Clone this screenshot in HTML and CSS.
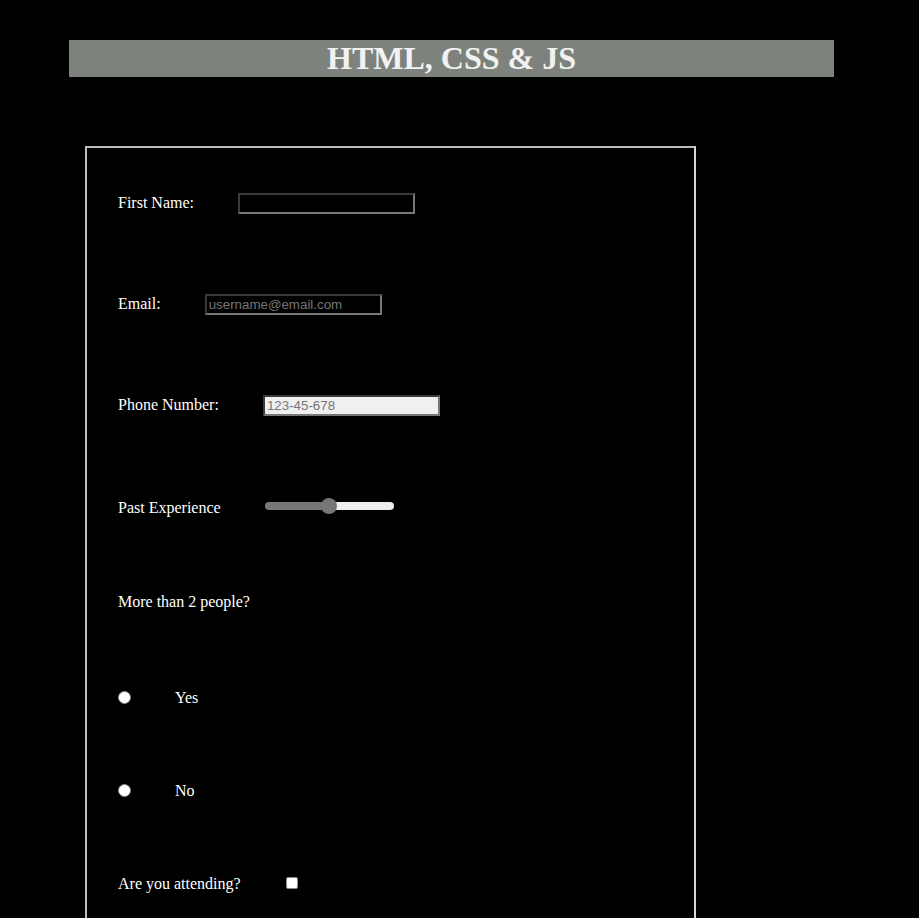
FILE: index.html
```html
<!DOCTYPE html>
<html lang="en">
<head>
<meta charset="utf-8">
<title>HTML, CSS &amp; JS</title>
<link rel="stylesheet" href="styles.css">
</head>
<body>
<header class="banner">
  <h1 class="banner-title">HTML, CSS &amp; JS</h1>
</header>
<form class="form-box">
  <div class="row">
    <label class="label" for="fname">First Name:</label>
    <input class="text-input" id="fname" type="text">
  </div>
  <div class="row">
    <label class="label" for="email">Email:</label>
    <input class="text-input" id="email" type="email" placeholder="username@email.com">
  </div>
  <div class="row">
    <label class="label" for="phone">Phone Number:</label>
    <input class="text-input text-input--light" id="phone" type="tel" placeholder="123-45-678">
  </div>
  <div class="row row--wide">
    <label class="label" for="exp">Past Experience</label>
    <input class="range" id="exp" type="range" min="0" max="100" value="50">
  </div>
  <div class="row row--tight">
    <span class="label">More than 2 people?</span>
  </div>
  <div class="row row--loose">
    <input class="radio" id="yes" type="radio" name="people">
    <label class="label" for="yes">Yes</label>
  </div>
  <div class="row row--snug">
    <input class="radio" id="no" type="radio" name="people">
    <label class="label" for="no">No</label>
  </div>
  <div class="row row--snug">
    <label class="label" for="attend">Are you attending?</label>
    <input class="checkbox" id="attend" type="checkbox">
  </div>
</form>
</body>
</html>
```

FILE: styles.css
```css
html, body {
  background: #000;
}
body {
  margin: 0;
  padding: 40px 0 0 0;
  font-family: "Liberation Serif", "Times New Roman", serif;
  color: #fff;
}
.banner {
  margin: 0 85px 0 69px;
  height: 37px;
  background: #7d827d;
  display: flex;
  justify-content: center;
  align-items: center;
}
.banner-title {
  margin: 0;
  font-size: 32px;
  line-height: 37px;
  font-weight: bold;
  color: #f2f2f2;
}
.form-box {
  box-sizing: border-box;
  margin: 69px 0 0 85px;
  width: 611px;
  border: 2px solid #d8d8d8;
  border-top-color: #bdbdbd;
  border-left-color: #bdbdbd;
  padding: 45px 0 60px 31px;
  display: flex;
  flex-direction: column;
}
.row {
  height: 20px;
  display: flex;
  align-items: center;
  gap: 44px;
}
.row + .row {
  margin-top: 81px;
}
.row + .row--wide {
  margin-top: 83px;
}
.row + .row--tight {
  margin-top: 74px;
}
.row + .row--loose {
  margin-top: 76px;
}
.row + .row--snug {
  margin-top: 73px;
}
.label {
  font-size: 16px;
  line-height: 18px;
  color: #fff;
}
.text-input {
  box-sizing: border-box;
  width: 177px;
  height: 21px;
  margin: 0;
  padding: 1px 2px;
  border: 2px solid;
  border-color: #3a3a3a #777 #777 #3a3a3a;
  background: #000;
  color: #fff;
  font-family: "Liberation Sans", Arial, sans-serif;
  font-size: 13.33px;
  outline: none;
}
.text-input::placeholder {
  color: #767676;
}
.text-input--light {
  background: #f0f0f0;
  color: #000;
}
.range {
  -webkit-appearance: none;
  appearance: none;
  margin: 0;
  width: 129px;
  height: 16px;
  background: transparent;
  position: relative;
  top: -2px;
}
.range::-webkit-slider-runnable-track {
  height: 8px;
  border-radius: 4px;
  background: linear-gradient(to right, #777 0 50%, #efefef 50% 100%);
}
.range::-webkit-slider-thumb {
  -webkit-appearance: none;
  appearance: none;
  width: 16px;
  height: 16px;
  border-radius: 50%;
  background: #777;
  margin-top: -4px;
}
.radio {
  -webkit-appearance: none;
  appearance: none;
  margin: 0;
  width: 13px;
  height: 13px;
  border-radius: 50%;
  background: #fff;
  border: 1px solid #8a8a8a;
  box-sizing: border-box;
  position: relative;
  top: -1px;
}
.checkbox {
  -webkit-appearance: none;
  appearance: none;
  margin: 0 0 0 1px;
  width: 12px;
  height: 12px;
  border-radius: 2px;
  background: #fff;
  border: 1px solid #8a8a8a;
  box-sizing: border-box;
  position: relative;
  top: -1px;
}
```
